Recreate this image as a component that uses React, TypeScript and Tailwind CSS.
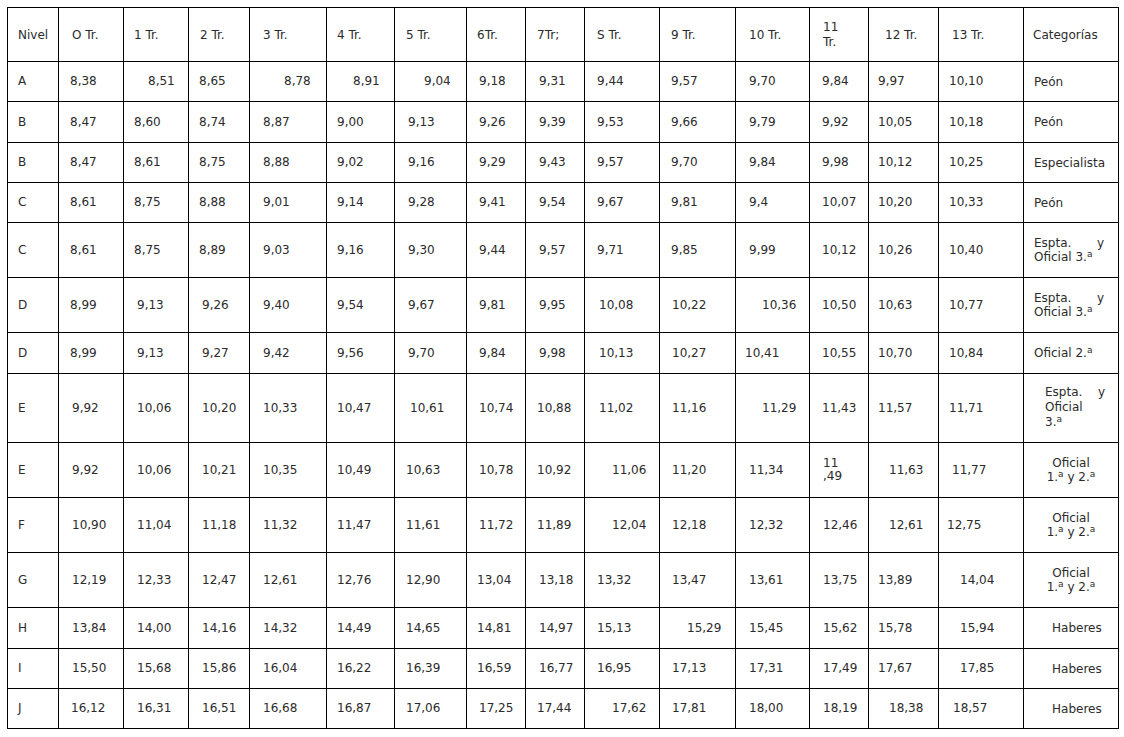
import { ReactNode } from "react";

const PL: Record<number, string> = {
  9: "pl-[8px]",
  10: "pl-[9px]",
  11: "pl-[10px]",
  12: "pl-[11px]",
  13: "pl-[12px]",
  14: "pl-[13px]",
  15: "pl-[14px]",
  16: "pl-[15px]",
  17: "pl-[16px]",
  21: "pl-[20px]",
  22: "pl-[21px]",
  25: "pl-[24px]",
  27: "pl-[26px]",
  28: "pl-[27px]",
  29: "pl-[28px]",
  30: "pl-[29px]",
  35: "pl-[34px]",
};

const Sup = () => <span className="relative -top-[4px] text-[9px]">a</span>;

const Espta = () => (
  <div className="w-[70px] leading-[14px]">
    <div className="flex justify-between">
      <span>Espta.</span>
      <span>y</span>
    </div>
    <div>Oficial 3.<Sup /></div>
  </div>
);

const Oficial12 = () => (
  <div className="w-full text-center leading-[14px]">
    <div>Oficial</div>
    <div>1.<Sup /> y 2.<Sup /></div>
  </div>
);

const HEAD = ["Nivel", "O Tr.", "1 Tr.", "2 Tr.", "3 Tr.", "4 Tr.", "5 Tr.", "6Tr.", "7Tr;", "S Tr.", "9 Tr.", "10 Tr.", "11 Tr.", "12 Tr.", "13 Tr.", "Categorías"];
const HEAD_OFF = [11, 14, 11, 12, 14, 11, 12, 11, 12, 13, 12, 14, 14, 17, 14, 10];

type Row = { cells: string[]; offs: number[]; cat: ReactNode; catOff?: number };

const ROWS: Row[] = [
  {
    cells: ["A", "8,38", "8,51", "8,65", "8,78", "8,91", "9,04", "9,18", "9,31", "9,44", "9,57", "9,70", "9,84", "9,97", "10,10"],
    offs: [11, 12, 25, 11, 35, 27, 30, 13, 14, 13, 12, 14, 13, 10, 11],
    cat: "Peón",
    catOff: 11,
  },
  {
    cells: ["B", "8,47", "8,60", "8,74", "8,87", "9,00", "9,13", "9,26", "9,39", "9,53", "9,66", "9,79", "9,92", "10,05", "10,18"],
    offs: [11, 12, 11, 11, 14, 11, 14, 13, 14, 13, 12, 14, 13, 10, 11],
    cat: "Peón",
    catOff: 11,
  },
  {
    cells: ["B", "8,47", "8,61", "8,75", "8,88", "9,02", "9,16", "9,29", "9,43", "9,57", "9,70", "9,84", "9,98", "10,12", "10,25"],
    offs: [11, 12, 11, 11, 14, 11, 14, 13, 14, 13, 12, 14, 13, 10, 11],
    cat: "Especialista",
    catOff: 11,
  },
  {
    cells: ["C", "8,61", "8,75", "8,88", "9,01", "9,14", "9,28", "9,41", "9,54", "9,67", "9,81", "9,4", "10,07", "10,20", "10,33"],
    offs: [11, 12, 11, 11, 14, 11, 14, 13, 14, 13, 12, 14, 13, 10, 11],
    cat: "Peón",
    catOff: 11,
  },
  {
    cells: ["C", "8,61", "8,75", "8,89", "9,03", "9,16", "9,30", "9,44", "9,57", "9,71", "9,85", "9,99", "10,12", "10,26", "10,40"],
    offs: [11, 12, 11, 11, 14, 11, 14, 13, 14, 13, 12, 14, 13, 10, 11],
    cat: <Espta />,
    catOff: 11,
  },
  {
    cells: ["D", "8,99", "9,13", "9,26", "9,40", "9,54", "9,67", "9,81", "9,95", "10,08", "10,22", "10,36", "10,50", "10,63", "10,77"],
    offs: [11, 12, 14, 14, 14, 11, 14, 13, 14, 15, 13, 27, 13, 10, 11],
    cat: <Espta />,
    catOff: 11,
  },
  {
    cells: ["D", "8,99", "9,13", "9,27", "9,42", "9,56", "9,70", "9,84", "9,98", "10,13", "10,27", "10,41", "10,55", "10,70", "10,84"],
    offs: [11, 12, 14, 14, 14, 11, 14, 13, 14, 15, 13, 10, 13, 10, 11],
    cat: (
      <span>
        Oficial 2.<Sup />
      </span>
    ),
    catOff: 11,
  },
  {
    cells: ["E", "9,92", "10,06", "10,20", "10,33", "10,47", "10,61", "10,74", "10,88", "11,02", "11,16", "11,29", "11,43", "11,57", "11,71"],
    offs: [11, 14, 14, 14, 14, 11, 16, 13, 12, 15, 13, 27, 13, 10, 11],
    cat: (
      <div className="w-[60px] leading-[15px]">
        <div className="flex justify-between">
          <span>Espta.</span>
          <span>y</span>
        </div>
        <div>Oficial</div>
        <div>3.<Sup /></div>
      </div>
    ),
    catOff: 22,
  },
  {
    cells: ["E", "9,92", "10,06", "10,21", "10,35", "10,49", "10,63", "10,78", "10,92", "11,06", "11,20", "11,34", "11\n,49", "11,63", "11,77"],
    offs: [11, 14, 14, 14, 14, 11, 12, 13, 12, 28, 13, 14, 14, 21, 14],
    cat: <Oficial12 />,
  },
  {
    cells: ["F", "10,90", "11,04", "11,18", "11,32", "11,47", "11,61", "11,72", "11,89", "12,04", "12,18", "12,32", "12,46", "12,61", "12,75"],
    offs: [11, 14, 14, 14, 14, 11, 12, 13, 12, 28, 13, 14, 14, 21, 9],
    cat: <Oficial12 />,
  },
  {
    cells: ["G", "12,19", "12,33", "12,47", "12,61", "12,76", "12,90", "13,04", "13,18", "13,32", "13,47", "13,61", "13,75", "13,89", "14,04"],
    offs: [11, 14, 14, 14, 14, 11, 12, 11, 14, 13, 13, 14, 14, 10, 22],
    cat: <Oficial12 />,
  },
  {
    cells: ["H", "13,84", "14,00", "14,16", "14,32", "14,49", "14,65", "14,81", "14,97", "15,13", "15,29", "15,45", "15,62", "15,78", "15,94"],
    offs: [11, 14, 14, 14, 14, 11, 12, 11, 14, 13, 28, 14, 14, 10, 22],
    cat: "Haberes",
    catOff: 29,
  },
  {
    cells: ["I", "15,50", "15,68", "15,86", "16,04", "16,22", "16,39", "16,59", "16,77", "16,95", "17,13", "17,31", "17,49", "17,67", "17,85"],
    offs: [11, 14, 14, 14, 14, 11, 12, 11, 14, 13, 13, 14, 14, 10, 22],
    cat: "Haberes",
    catOff: 29,
  },
  {
    cells: ["J", "16,12", "16,31", "16,51", "16,68", "16,87", "17,06", "17,25", "17,44", "17,62", "17,81", "18,00", "18,19", "18,38", "18,57"],
    offs: [11, 13, 14, 14, 14, 11, 12, 13, 12, 28, 13, 14, 14, 21, 15],
    cat: "Haberes",
    catOff: 29,
  },
];

const App = () => {
  return (
    <div className="min-h-screen bg-white pt-[7px] pl-[7px] font-['DejaVu_Sans',sans-serif] text-[12px] text-[#2b2b2b]">
      <div className="inline-grid grid-cols-[50px_64px_64px_60px_76px_67px_71px_58px_58px_74px_75px_73px_58px_69px_84px_94px] grid-rows-[53px_39px_40px_39px_39px_54px_54px_40px_68px_54px_54px_54px_40px_39px_39px] gap-px bg-black p-px">
        {HEAD.map((h, i) => (
          <div key={i} className={"flex items-center bg-white " + PL[HEAD_OFF[i]]}>
            {h === "11 Tr." ? (
              <div className="leading-[15px]">
                11
                <br />
                Tr.
              </div>
            ) : (
              <span className="whitespace-nowrap">{h}</span>
            )}
          </div>
        ))}
        {ROWS.map((row, r) => (
          <>
            {row.cells.map((c, i) => (
              <div key={r + "-" + i} className={"flex items-center bg-white " + PL[row.offs[i]]}>
                <span className="whitespace-pre leading-[13px]">{c}</span>
              </div>
            ))}
            <div key={r + "-cat"} className={"flex items-center bg-white " + (row.catOff ? PL[row.catOff] : "")}>
              {row.cat}
            </div>
          </>
        ))}
      </div>
    </div>
  );
};

export default App;
